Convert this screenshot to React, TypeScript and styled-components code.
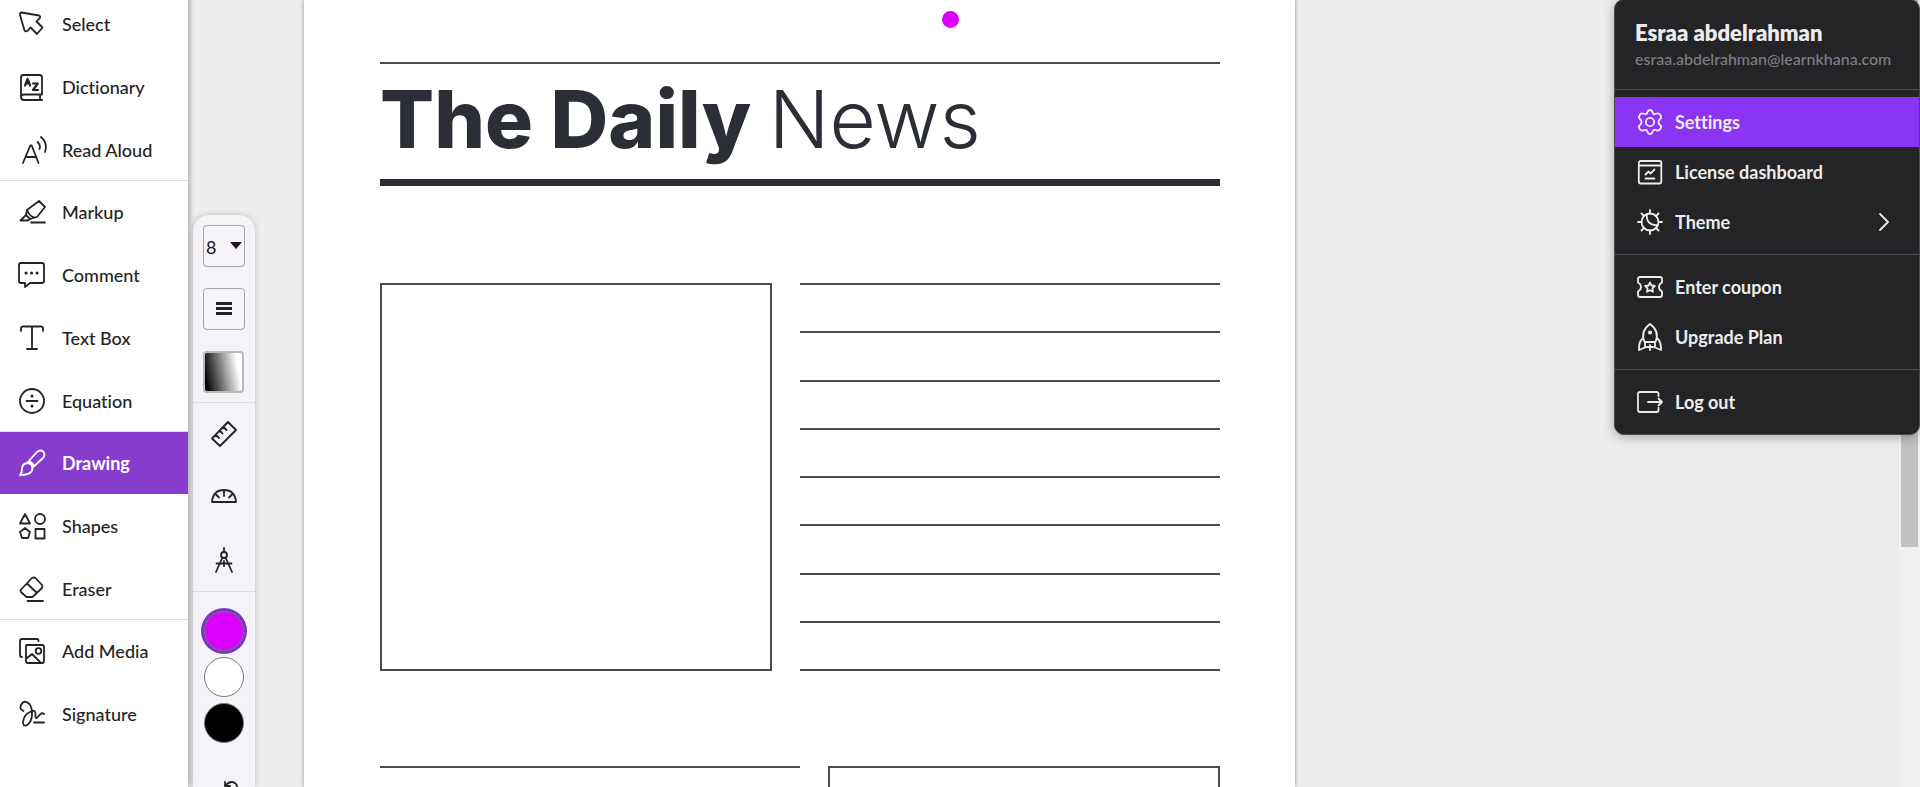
import React from "react";
import styled, { createGlobalStyle } from "styled-components";

const GlobalStyle = createGlobalStyle`
  * { box-sizing: border-box; }
  body { margin: 0; background: #ededed; }
  button, select, a { font: inherit; color: inherit; }
  button { margin: 0; padding: 0; border: 0; background: none; }
`;

const Shell = styled.div`
  display: flex;
  height: 100vh;
  overflow: hidden;
  background: #ededed;
  color: #242424;
  font-family: Lato, sans-serif;
  font-size: 18px;
  font-variant-ligatures: none;
`;

const Icon = styled.svg<{ $size?: number }>`
  width: ${(p) => p.$size ?? 30}px;
  height: ${(p) => p.$size ?? 30}px;
  flex: none;
  display: block;
  fill: none;
  stroke: currentColor;
  stroke-width: 1.8;
  stroke-linecap: round;
  stroke-linejoin: round;
`;

const Sidebar = styled.nav`
  flex: none;
  width: 188px;
  margin-top: -7px;
  background: #fff;
  z-index: 1;
  box-shadow: 1px 0 6px rgba(0, 0, 0, 0.35);
`;

const Group = styled.div`
  display: flex;
  flex-direction: column;
  gap: 1px;
`;

const Rule = styled.hr`
  height: 1px;
  margin: -1px 0 0;
  border: 0;
  background: #dedee0;
`;

const Tool = styled.button<{ $active?: boolean }>`
  display: flex;
  align-items: center;
  gap: 15px;
  height: 62px;
  padding: 0 17px;
  text-align: left;
  font-weight: ${(p) => (p.$active ? 700 : 500)};
  background: ${(p) => (p.$active ? "#883ccd" : "transparent")};
  color: ${(p) => (p.$active ? "#fff" : "#242424")};
`;

const Stage = styled.main`
  position: relative;
  flex: 1;
  display: flex;
  align-items: stretch;
`;

const Options = styled.aside`
  flex: none;
  width: 62px;
  margin: 215px 49px 0 5px;
  padding-top: 10px;
  display: flex;
  flex-direction: column;
  align-items: center;
  border-radius: 16px 16px 0 0;
  background: #f5f3f7;
  box-shadow: 0 0 6px rgba(0, 0, 0, 0.2);
  overflow: hidden;
`;

const OptionRule = styled.hr`
  flex: none;
  width: 100%;
  height: 1px;
  margin: 0;
  border: 0;
  background: #dfdfe2;
`;

const Boxes = styled.div`
  display: flex;
  flex-direction: column;
  gap: 21px;
  padding-bottom: 9px;
`;

const SizeBox = styled.label`
  position: relative;
  display: flex;
  align-items: center;
  width: 42px;
  height: 42px;
  border: 1px solid #a3a2a8;
  border-radius: 4px;
`;

const SizeSelect = styled.select`
  appearance: none;
  width: 40px;
  height: 40px;
  padding: 2px 0 0 2px;
  border: 0;
  background: transparent;
  color: #1b1425;
`;

const Caret = styled.svg`
  position: absolute;
  right: 2px;
  top: 16px;
  width: 12px;
  height: 7px;
  fill: #1b1425;
  pointer-events: none;
`;

const BoxButton = styled.button`
  display: grid;
  place-items: center;
  width: 42px;
  height: 42px;
  border: 1px solid #a3a2a8;
  border-radius: 4px;
`;

const GradientButton = styled.button`
  width: 41px;
  height: 42px;
  border: 2px solid #b8b8b8;
  border-radius: 4px;
  background: linear-gradient(80deg, #000 5%, #fff 85%);
`;

const Instruments = styled.div`
  display: flex;
  flex-direction: column;
  gap: 2px;
  padding-bottom: 1px;
`;

const Instrument = styled.button`
  flex: none;
  display: grid;
  place-items: center;
  width: 62px;
  height: 61px;
`;

const Swatches = styled.div`
  display: flex;
  flex-direction: column;
  align-items: center;
  gap: 6px;
  padding: 19px 0 18px;
`;

const Swatch = styled.button<{ $color: string; $selected?: boolean }>`
  width: 40px;
  height: 40px;
  border: 1px solid #777;
  border-radius: 50%;
  background: ${(p) => p.$color};
  box-shadow: ${(p) => (p.$selected ? "0 0 0 3px #7636c6" : "none")};
`;

const Page = styled.article`
  position: relative;
  flex: 0 1 991px;
  padding: 62px 75px 0 76px;
  background: #fff;
  color: #2c2e36;
  box-shadow: 0 0 4px rgba(0, 0, 0, 0.4);
  overflow: hidden;
`;

const InkDot = styled.span`
  position: absolute;
  left: 638px;
  top: 11px;
  width: 17px;
  height: 17px;
  border-radius: 50%;
  background: #dc00ff;
`;

const Line = styled.div<{ $thick?: boolean }>`
  height: ${(p) => (p.$thick ? 7 : 2)}px;
  background: ${(p) => (p.$thick ? "#2c2e36" : "#4a4c53")};
`;

const Masthead = styled.h1`
  margin: 0;
  height: 115px;
  font-family: Inter, sans-serif;
  font-size: 80px;
  line-height: 109px;
  font-weight: 800;
  white-space: nowrap;
`;

const Light = styled.span`
  font-weight: 300;
`;

const Columns = styled.section`
  display: flex;
  gap: 28px;
  height: 388px;
  margin-top: 97px;
`;

const Frame = styled.div`
  flex: 0 0 392px;
  border: 2px solid #4a4c53;
`;

const Ruled = styled.div`
  flex: 1;
  display: flex;
  flex-direction: column;
  justify-content: space-between;
`;

const Lower = styled.section`
  display: flex;
  gap: 28px;
  height: 388px;
  margin-top: 95px;
`;

const Menu = styled.div`
  position: absolute;
  right: 0;
  top: -1px;
  width: 306px;
  border: 1px solid #4b4b52;
  border-radius: 10px;
  background: #242426;
  color: #ececec;
  box-shadow: 0 2px 12px rgba(0, 0, 0, 0.3);
  overflow: hidden;
`;

const Profile = styled.header`
  height: 89px;
  padding: 20px 20px 0;
`;

const Name = styled.h2`
  margin: 0;
  font-size: 22px;
  line-height: 26px;
  font-weight: 800;
`;

const Email = styled.p`
  margin: 0;
  font-size: 16px;
  line-height: 26px;
  font-weight: 500;
  color: #7f7d85;
`;

const MenuGroup = styled.div`
  display: flex;
  flex-direction: column;
  padding: 7px 0;
  border-top: 1px solid #4f4f57;
`;

const MenuItem = styled.button<{ $active?: boolean }>`
  display: flex;
  align-items: center;
  gap: 10px;
  height: 50px;
  padding: 0 25px 0 20px;
  font-weight: 700;
  text-align: left;
  background: ${(p) => (p.$active ? "#8c34f4" : "transparent")};
`;

const MenuLabel = styled.span`
  flex: 1;
`;

const ScrollTrack = styled.div`
  position: absolute;
  right: 0;
  top: 0;
  bottom: 0;
  width: 21px;
  background: #f1f1f1;
`;

const ScrollThumb = styled.div`
  width: 17px;
  height: 547px;
  margin-left: 2px;
  background: #c1c1c1;
`;

const icons: Record<string, React.ReactNode> = {
  select: <path d="M4.5 3.5 L22 6.5 Q24 7.5 22.5 9.3 L19.5 12.5 L25.5 18.5 L20 25 L13.5 18.5 L10.5 21.8 Q8 23.5 7.3 20.8 L3 6 Q2.8 3.6 4.5 3.5Z" />,
  dictionary: <><path d="M25 22.500V5.500Q25 3 22.500 3H6.500Q4 3 4 5.500V25Q4 28 7 28H25M4 25Q4 22.500 7 22.500H25M23 22.500V28" /><path strokeWidth="2.200" d="M8 13.500 10.600 7 13.200 13.500M9 11.500H12.300M16 11.500H20.800L16 18H21" /></>,
  read: <path d="M6 28 13.300 10.500H14.700L21.500 28M8.500 22H19.500M20.500 7Q24 10 22.500 14M24 2Q31 8 28 17" />,
  markup: <><path d="M10 13 22 4 28 10 20 20Q14 22 10 13ZM10 13 9 18 13 22 20 20" /><path d="M9 18 3.500 23.500H11L13 22M14 25.500H28" /></>,
  comment: <><path d="M4 3H25Q27 3 27 5V21Q27 23 25 23H13L8 27V23H4Q2 23 2 21V5Q2 3 4 3Z" /><path strokeWidth="3" d="M9 13h.1M14.500 13h.1M20 13h.1" /></>,
  text: <path d="M4 8V5.500Q4 3.500 6 3.500H24Q26 3.500 26 5.500V8M15 3.500V26M10 26H20" />,
  equation: <><circle cx="15" cy="15" r="12" /><path d="M9.500 15H20.500" /><path strokeWidth="3" d="M15 10v.1M15 20v.1" /></>,
  drawing: <path d="M10 15 20 4Q24 1 26.500 4 28.500 7 26 10L15 20M10 15Q15 15 15.500 20 15.500 27 3 27 5 25 5 21 5 16 10 15ZM12 13Q16 15 17 18" />,
  shapes: <><path d="M8 3 3 12.500H13ZM8 17 3 21 5 27H11L13 21ZM18.500 18H27.500V27.500H18.500Z" /><circle cx="23" cy="8" r="5" /></>,
  eraser: <path d="M4 15.500 15 4Q17 3 18.500 4L25 11Q26 12.500 25 14L15.500 23H9.500L4 18Q3 17 4 15.500ZM10 9.500 20 19M10.500 27H26" />,
  media: <><path d="M5 21Q3 21 3 19V5Q3 3 5 3H20Q21.500 3 21.500 5M9.500 9H25Q27 9 27 11V25Q27 27 25 27H11Q9 27 9 25V9.500M10 22 15 18 24 27" /><circle cx="21.500" cy="15" r="2.800" /></>,
  signature: <path d="M6.500 12Q2 10 4 6 7 0 12.500 5 15 8 15 15 15 23 10 26 6 28 6 23 7 15 14 12.500 19 10 18.500 16 18 22 22.500 16 25 13 27 15M17 23.500H27" />,
  settings: <><circle cx="15" cy="15" r="4.200" /><path d="M12.400 5.400Q13 3 15 3T17.600 5.400Q18.500 8 21 6.800 24 5.500 25.300 8 27 10.500 25 12 23.300 13.500 23.500 15 23.300 16.500 25 18 27 19.500 25.300 22 24 24.500 21 23.200 18.500 22 17.600 24.600 17 27 15 27T12.400 24.600Q11.500 22 9 23.200 6 24.500 4.700 22 3 19.500 5 18 6.700 16.500 6.500 15 6.700 13.500 5 12 3 10.500 4.700 8 6 5.500 9 6.800 11.500 8 12.400 5.400Z" /></>,
  license: <><rect x="3.800" y="4" width="22.500" height="22.500" rx="2" /><path d="M4 8.500H26M10.500 21.500H19.500M10.500 17.500 13.500 14.500 15.500 16.500 19.500 12.500" /></>,
  theme: <><circle cx="15" cy="15" r="8.500" /><path d="M15 3V6.500M15 23.500V27M3 15H6.500M23.500 15H27M6.500 6.500 9 9M21 21 23.500 23.500M23.500 6.500 21 9M9 21 6.500 23.500M12 7Q11 12 14 15.500 17.500 19 22.500 18" /></>,
  coupon: <><path d="M5 5H25Q27 5 27 7V10.500Q24 12 24 15T27 19.500V23Q27 25 25 25H5Q3 25 3 23V19.500Q6 18 6 15T3 10.500V7Q3 5 5 5Z" /><path d="M15 10.500 16.500 13.500 19.800 14 17.400 16.400 18 19.800 15 18.200 12 19.800 12.600 16.400 10.200 14 13.500 13.500Z" /></>,
  upgrade: <><path d="M9.500 20Q5 9 15 2 25 9 20.500 20ZM8 16Q3.500 20 4 28L10 25.500Q15 24 20 25.500L26 28Q26.500 20 22 16M10 20V25M20 20V25M15 23V28" /><circle cx="15" cy="10.500" r="1.200" fill="currentColor" /></>,
  logout: <path d="M23.500 9V7Q23.500 5 21.500 5H5Q3 5 3 7V23Q3 25 5 25H21.500Q23.500 25 23.500 23V21M13 15H27M23.500 11.500 27 15 23.500 18.500" />,
  ruler: <path d="M3 19.500 19 3 27 11 11 27ZM7 16 10 19M11 12 13.500 14.500M14.500 8 17.500 11" />,
  protractor: <path d="M3 20Q4 8 15 8T27 20ZM15 9V14M7 12.500 10 15.500M23 12.500 20 15.500" />,
  compass: <><circle cx="15" cy="10" r="3" /><path d="M15 3V7M13.500 12.500 7 27M16.500 12.500 23 27M7.500 18.500H22.500M15 16V21" /></>,
  undo: <path d="M16 9Q21 3 26 6 30 9 27 15M16 9V5M16 9H21" />,
};

const Glyph = ({ name, size }: { name: string; size?: number }) => (
  <Icon viewBox="0 0 30 30" $size={size} aria-hidden="true">{icons[name]}</Icon>
);

const toolGroups: [string, string][][] = [
  [["select", "Select"], ["dictionary", "Dictionary"], ["read", "Read Aloud"]],
  [["markup", "Markup"], ["comment", "Comment"], ["text", "Text Box"], ["equation", "Equation"]],
  [["drawing", "Drawing"], ["shapes", "Shapes"], ["eraser", "Eraser"]],
  [["media", "Add Media"], ["signature", "Signature"]],
];

const menuGroups: [string, string][][] = [
  [["settings", "Settings"], ["license", "License dashboard"], ["theme", "Theme"]],
  [["coupon", "Enter coupon"], ["upgrade", "Upgrade Plan"]],
  [["logout", "Log out"]],
];

export default function App() {
  return (
    <Shell>
      <GlobalStyle />
      <Sidebar>
        {toolGroups.map((group, i) => (
          <React.Fragment key={i}>
            {i > 0 && <Rule />}
            <Group>
              {group.map(([icon, label]) => (
                <Tool key={label} $active={label === "Drawing"}>
                  <Glyph name={icon} />
                  {label}
                </Tool>
              ))}
            </Group>
          </React.Fragment>
        ))}
      </Sidebar>
      <Stage>
        <Options>
          <Boxes>
            <SizeBox>
              <SizeSelect aria-label="Brush size" defaultValue="8">
                <option>8</option>
              </SizeSelect>
              <Caret viewBox="0 0 12 7"><path d="M0 0H12L6 7Z" /></Caret>
            </SizeBox>
            <BoxButton aria-label="Line style">
              <Icon viewBox="0 0 30 30" aria-hidden="true">
                <path strokeWidth="3" strokeLinecap="butt" d="M7 9.500H23M7 14.500H23M7 19.500H23" />
              </Icon>
            </BoxButton>
            <GradientButton aria-label="Opacity" />
          </Boxes>
          <OptionRule />
          <Instruments>
            {["ruler", "protractor", "compass"].map((name) => (
              <Instrument key={name} aria-label={name}><Glyph name={name} /></Instrument>
            ))}
          </Instruments>
          <OptionRule />
          <Swatches>
            <Swatch $color="#dc00ff" $selected aria-label="Magenta" />
            <Swatch $color="#fff" aria-label="White" />
            <Swatch $color="#000" aria-label="Black" />
          </Swatches>
          <Instrument aria-label="Undo"><Glyph name="undo" /></Instrument>
        </Options>
        <Page>
          <InkDot />
          <Line />
          <Masthead>The Daily <Light>News</Light></Masthead>
          <Line $thick />
          <Columns>
            <Frame />
            <Ruled>
              {Array.from({ length: 9 }, (_, i) => <Line key={i} />)}
            </Ruled>
          </Columns>
          <Lower>
            <Ruled><Line /></Ruled>
            <Frame />
          </Lower>
        </Page>
        <ScrollTrack><ScrollThumb /></ScrollTrack>
        <Menu>
          <Profile>
            <Name>Esraa abdelrahman</Name>
            <Email>esraa.abdelrahman@learnkhana.com</Email>
          </Profile>
          {menuGroups.map((group, i) => (
            <MenuGroup key={i}>
              {group.map(([icon, label]) => (
                <MenuItem key={label} $active={label === "Settings"}>
                  <Glyph name={icon} />
                  <MenuLabel>{label}</MenuLabel>
                  {label === "Theme" && (
                    <Icon viewBox="0 0 20 20" $size={20} aria-hidden="true"><path d="M6 2 14 10 6 18" /></Icon>
                  )}
                </MenuItem>
              ))}
            </MenuGroup>
          ))}
        </Menu>
      </Stage>
    </Shell>
  );
}
